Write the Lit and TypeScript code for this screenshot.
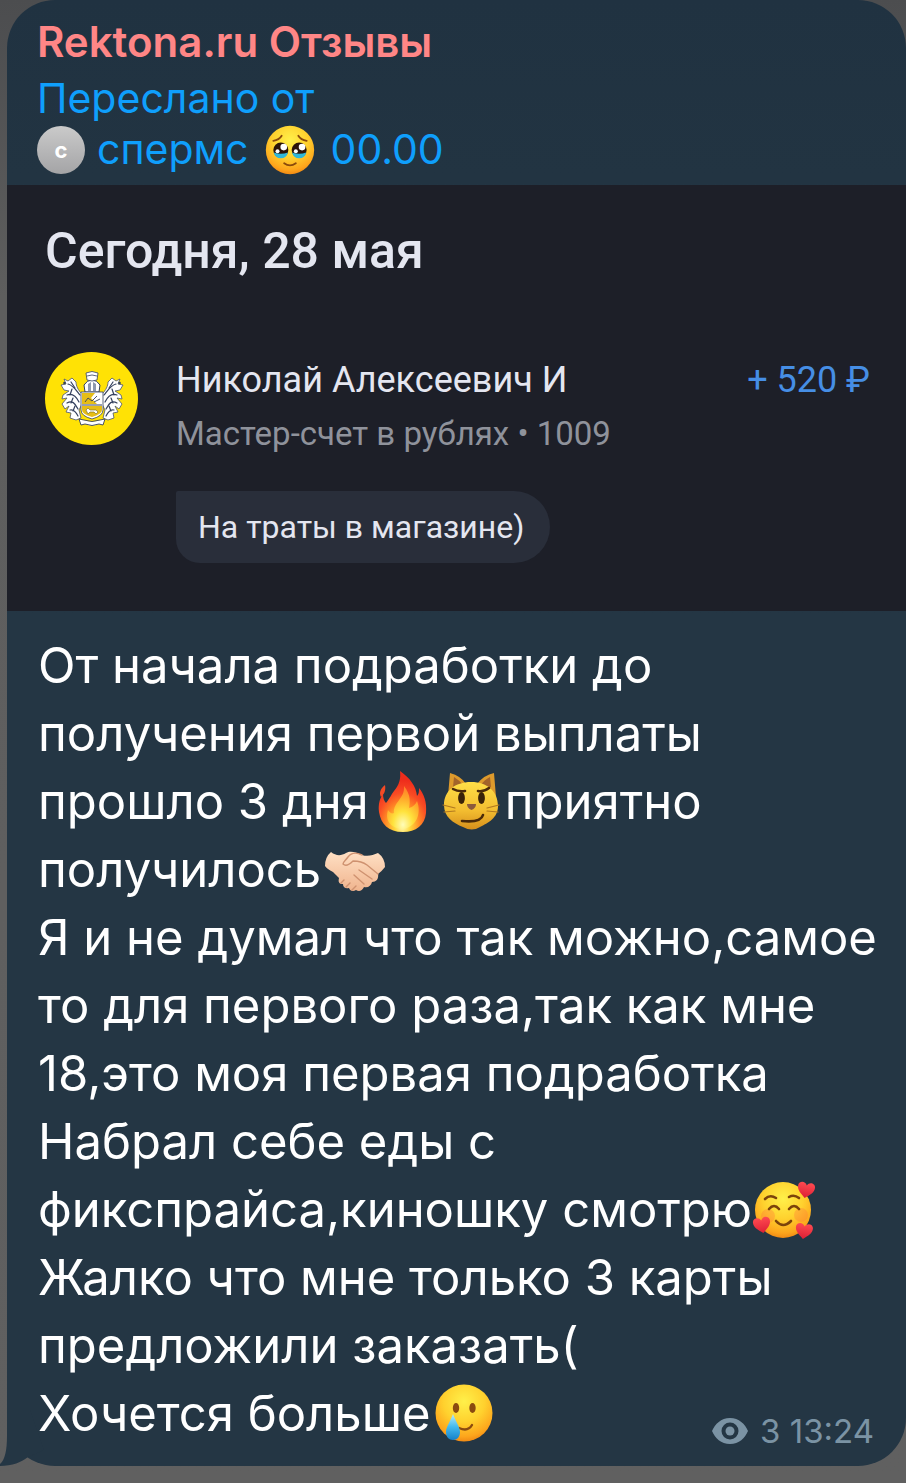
import { LitElement, html, svg, css } from "lit";
import { customElement, property } from "lit/decorators.js";

const defs = svg`
  <defs>
    <radialGradient id="face" cx="0.5" cy="0.3" r="0.72">
      <stop offset="0" stop-color="#fff04a" />
      <stop offset="0.5" stop-color="#ffd12e" />
      <stop offset="0.85" stop-color="#fda51c" />
      <stop offset="1" stop-color="#ee8412" />
    </radialGradient>
    <linearGradient id="cat" x1="0" y1="0" x2="0" y2="1">
      <stop offset="0" stop-color="#ffdf47" />
      <stop offset="0.6" stop-color="#f3bd30" />
      <stop offset="1" stop-color="#d68f1c" />
    </linearGradient>
    <radialGradient id="fire" cx="0.5" cy="0.9" r="0.75">
      <stop offset="0" stop-color="#fffbc0" />
      <stop offset="0.22" stop-color="#ffd93c" />
      <stop offset="0.48" stop-color="#ff8a26" />
      <stop offset="0.72" stop-color="#f94c24" />
      <stop offset="1" stop-color="#ee2d1c" />
    </radialGradient>
    <radialGradient id="flame" cx="0.5" cy="0.9" r="0.9">
      <stop offset="0" stop-color="#fffcb8" />
      <stop offset="0.35" stop-color="#ffe23c" />
      <stop offset="0.7" stop-color="#ffa52a" />
      <stop offset="1" stop-color="#ff7a28" />
    </radialGradient>
    <linearGradient id="skin" x1="0" y1="0" x2="0" y2="1">
      <stop offset="0" stop-color="#ffe0c4" />
      <stop offset="1" stop-color="#f0b48e" />
    </linearGradient>
    <linearGradient id="heart" x1="0" y1="0" x2="0" y2="1">
      <stop offset="0" stop-color="#ff4a50" />
      <stop offset="1" stop-color="#dd1f35" />
    </linearGradient>
    <linearGradient id="tear" x1="0" y1="0" x2="0" y2="1">
      <stop offset="0" stop-color="#b9ecfa" />
      <stop offset="0.5" stop-color="#43b9ee" />
      <stop offset="1" stop-color="#1680c8" />
    </linearGradient>
  </defs>`;

const heart = svg`<path fill="url(#heart)" d="M0 8C-5 4-9 1-8.500-4C-8-8-2-9 0-4.500C2-9 8-8 8.500-4C9 1 5 4 0 8Z" />`;

const drawings = {
  pleading: svg`
    <circle cx="30" cy="30" r="29" fill="url(#face)" />
    <g fill="none" stroke="#8a4a0c" stroke-width="2.200" stroke-linecap="round">
      <path d="M10 19Q17 18 20 13" />
      <path d="M50 19Q43 18 40 13" />
      <path d="M23 46Q30 51 37 46" />
    </g>
    <circle cx="19" cy="30" r="9" fill="#2b1409" />
    <circle cx="41" cy="30" r="9" fill="#2b1409" />
    <path d="M10.500 33Q19 36 27.500 33Q26 40 19 40T10.500 33Z" fill="#2fb7d8" />
    <path d="M32.500 33Q41 36 49.500 33Q48 40 41 40T32.500 33Z" fill="#2fb7d8" />
    <circle cx="22.500" cy="26.500" r="4" fill="#fff" />
    <circle cx="44.500" cy="26.500" r="4" fill="#fff" />
    <circle cx="15" cy="31.500" r="2.400" fill="#fff" />
    <circle cx="37" cy="31.500" r="2.400" fill="#fff" />`,
  fire: svg`
    <path fill="url(#fire)" d="M27 0C37 7 43 15 44 25C46 23 46 20 46 17C51 23 54 31 53 42C52 54 43 61 30 61C15 61 8 53 6 41C5 33 7 27 10 23C10 27 11 30 13 32C17 27 18 24 21 20C26 14 28 8 27 0Z" />
    <path fill="url(#flame)" d="M31 15C38 24 37 31 36 37C40 36 43 33 44 30C49 43 43 56 30 58C16 57 12 48 15 39C17 42 19 43 21 42C20 31 32 28 31 15Z" />
    <path fill="#f44a25" d="M12 14C13 20 11 23 8 26C6 22 7 18 12 14Z" />`,
  cat: svg`
    <path fill="#dd9a2c" d="M7 25L9 2Q20 5 25 13L36 13Q43 4 53 2L55 26Z" />
    <path fill="#a3642a" d="M12 16L13 6Q18 9 22 14ZM50 16L49 6Q43 9 40 14Z" />
    <path fill="url(#cat)" d="M30 11C47 11 57 21 57 35C57 47 47 52 39 56Q31 61 22 56C12 52 3 46 3 34C3 20 14 11 30 11Z" />
    <g fill="#3a2208">
      <ellipse cx="20.500" cy="27" rx="3.400" ry="6" />
      <ellipse cx="40.500" cy="27" rx="3.400" ry="6" />
    </g>
    <g fill="none" stroke="#4a2a0a" stroke-width="2.600" stroke-linecap="round">
      <path d="M12 18Q17 21 24 20" />
      <path d="M37 20Q43 21 48 17" />
      <path d="M21 50Q40 52 42 44" />
    </g>
    <g fill="none" stroke="#b07820" stroke-width="1.200" stroke-linecap="round">
      <path d="M2 34L14 37M3 41L14 40M58 34L46 37M57 41L46 40" />
    </g>
    <path fill="#8c5a3c" d="M26 33H35Q35 37 30.500 39Q26 37 26 33Z" />`,
  handshake: svg`
    <g transform="translate(0 3)">
      <path fill="url(#skin)" d="M6 10C11 14 16 14 21 11C26 8 32 11 37 13C43 15 48 13 53 11Q60 16 60 25Q57 29 53 32C54 37 51 40 47 40C46 44 43 46 39 45C37 49 34 50 31 48C28 50 25 49 24 46C20 47 18 45 18 42C14 42 13 40 14 36L8 30Q2 27 0 24Q0 15 6 10Z" />
      <g fill="none" stroke="#cf9270" stroke-width="1.400" stroke-linecap="round" stroke-linejoin="round">
        <path d="M37 13C31 10 26 11 23 15C20 19 18 20 18 22C21 25 25 22 28 19C34 19 38 20 42 23L53 32" />
        <path d="M34 28L47 37M29 33L39 42M19 38L16 41M25 41L21 45M31 44L27 48" />
      </g>
    </g>`,
  hearts: svg`
    <circle cx="27" cy="31" r="28" fill="url(#face)" />
    <circle cx="12" cy="37" r="7" fill="#ff7a3c" opacity="0.35" />
    <circle cx="45" cy="36" r="7" fill="#ff7a3c" opacity="0.35" />
    <g fill="none" stroke="#7c430b" stroke-width="2.600" stroke-linecap="round">
      <path d="M9 20Q14 15 20 19" />
      <path d="M33 18Q38 15 43 19" />
      <path d="M13 30Q18 24 23 30" />
      <path d="M33 30Q38 24 43 30" />
      <path d="M20 42Q27 50 35 42" />
    </g>
    <g transform="translate(50 11) rotate(10)">${heart}</g>
    <g transform="translate(6 46) rotate(-10)">${heart}</g>
    <g transform="translate(48 52) rotate(8)">${heart}</g>`,
  tear: svg`
    <circle cx="29" cy="30" r="28.500" fill="url(#face)" />
    <ellipse cx="21" cy="25" rx="3.200" ry="5" fill="#8a4a10" />
    <ellipse cx="37.500" cy="25" rx="3.200" ry="5" fill="#8a4a10" />
    <path d="M24 45Q33 49 37 42" fill="none" stroke="#8a4a10" stroke-width="2.400" stroke-linecap="round" />
    <path fill="url(#tear)" d="M18 31C21 39 25 44 25 49C25 54 22 57 18 57C14 57 11 54 11 49C11 44 15 39 18 31Z" />`,
};

type EmojiName = keyof typeof drawings;

@customElement("chat-emoji")
export class ChatEmoji extends LitElement {
  @property() name: EmojiName = "fire";
  @property() label = "";

  static styles = css`
    :host {
      display: inline-block;
      width: 60px;
      height: 60px;
      margin: 0 4px;
      vertical-align: -12px;
      line-height: 0;
    }
    svg {
      display: block;
      width: 100%;
      height: 100%;
      overflow: visible;
    }
  `;

  render() {
    return html`<svg viewBox="0 0 60 60" role="img" aria-label=${this.label}>
      ${defs}${drawings[this.name]}
    </svg>`;
  }
}

const wing = svg`
  <path fill="#fff" stroke="#4a5470" stroke-width="0.800" stroke-linejoin="round"
    d="M37 42C33 38 31 34 31 30L27 26L23 29L19 27L21 32L16 33L19 38L24 39L18 43L17 47L22 46L17 52L20 57L24 54L21 60L26 61L25 66L31 68L36 66L34 58L37 52Z" />
  <g fill="none" stroke="#34405e" stroke-width="1.200" stroke-linecap="round">
    <path d="M23 32C28 33 31 38 35 43M22 43C27 41 31 44 34 50M22 51C27 48 30 51 33 57M25 58C28 57 31 60 33 64" />
    <path d="M26 30L30 36M27 37L25 43M28 46L26 51M30 54L28 59" />
  </g>
  <circle cx="19.500" cy="31" r="1.300" fill="#34405e" />`;

const crest = svg`
  <circle cx="46.500" cy="46.500" r="46.500" fill="#ffe205" />
  ${wing}
  <g transform="matrix(-1 0 0 1 94 0)">${wing}</g>
  <path fill="#fff" stroke="#34405e" d="M40 40L39 33Q42 28 47 28T55 33L54 40Z" />
  <path fill="#8d98ae" d="M43 39V32L46 30V39ZM48 39V30L51 32V39Z" />
  <path fill="#fff" stroke="#34405e" stroke-width="0.800" d="M42 28L41 21Q47 18 53 21L52 28Q47 30 42 28Z" />
  <path fill="none" stroke="#34405e" stroke-width="0.800" d="M42 24Q47 22 52 24" />
  <path fill="#fff" stroke="#34405e" stroke-width="0.800" d="M36 40H58V58Q58 64 47 67Q36 64 36 58Z" />
  <path fill="#e5bd16" d="M37 41H50L46 46L52 52H37ZM37 54H57V58Q57 62 47 65Q37 62 37 58Z" />
  <path stroke="#34405e" stroke-width="1" d="M37 53H57" />
  <path fill="none" stroke="#34405e" stroke-width="0.900" d="M40 50L43 46L47 49L52 44M49 50L55 47" />
  <path fill="#fff" stroke="#6e6420" stroke-width="0.600" d="M41 58L43 56L45 58H51L53 60L51 62L49 60H45L43 62Z" />
  <path fill="#fff" stroke="#34405e" stroke-width="0.900" d="M34 67L39 68Q47 71 55 68L60 67L58 73L54 72Q47 75 40 72L36 73Z" />`;

@customElement("app-root")
export class AppRoot extends LitElement {
  static styles = css`
    :host {
      display: block;
      box-sizing: border-box;
      padding: 0 0 17px 7px;
      background: linear-gradient(#4c4d4f, #5e5e5e 20%, #606060);
      font-family: Inter, "Liberation Sans", sans-serif;
    }
    .bubble {
      position: relative;
      border-radius: 48px;
      background: linear-gradient(#203241, #223442 12%, #243644 42%, #243644);
    }
    .tail {
      position: absolute;
      left: -7px;
      bottom: 0;
      width: 44px;
      height: 56px;
    }
    .head {
      padding: 16px 31px 10px 30px;
      font-size: 41px;
      line-height: 51px;
      color: #0f9ffc;
    }
    .title,
    .line {
      margin: 0;
    }
    .title {
      margin-bottom: 6px;
      font-size: 42px;
      font-weight: 600;
      color: #ff8686;
    }
    .source {
      display: flex;
      align-items: center;
      gap: 12px;
      color: inherit;
      text-decoration: none;
    }
    .source chat-emoji {
      width: 50px;
      height: 50px;
    }
    .avatar {
      display: grid;
      place-items: center;
      width: 48px;
      height: 48px;
      border-radius: 50%;
      background: linear-gradient(#cacaca, #a4a4a6);
      font-size: 22px;
      font-weight: 700;
      line-height: 24px;
      color: #fff;
    }
    .bank {
      padding: 36px 36px 48px 38px;
      background: #1d1f28;
      color: #e4e6f0;
      font-family: Roboto, "Noto Sans", sans-serif;
    }
    .date {
      margin: 0 0 71px;
      font-size: 50px;
      font-weight: 500;
      line-height: 60px;
    }
    .operation {
      display: grid;
      grid-template-columns: 93px 1fr auto;
      column-gap: 38px;
    }
    .logo {
      width: 93px;
      height: 93px;
    }
    .name,
    .amount {
      margin: 0;
      font-size: 36px;
      line-height: 56px;
    }
    .amount {
      color: #468ee5;
    }
    .account {
      margin: 0;
      font-size: 33px;
      line-height: 52px;
      color: #8f929b;
    }
    .note {
      display: inline-block;
      margin: 31px 0 0;
      padding: 10px 26px 10px 22px;
      border-radius: 2px 36px 36px 24px;
      background: #292e3a;
      font-size: 32px;
      line-height: 52px;
    }
    .text {
      padding: 21px 28px 18px 31px;
      font-size: 49px;
      line-height: 68px;
      color: #fff;
    }
    .text p {
      margin: 0;
    }
    .last {
      display: flex;
      justify-content: space-between;
      align-items: flex-end;
    }
    .meta {
      display: flex;
      align-items: center;
      gap: 12px;
      padding-right: 4px;
      font-size: 33px;
      line-height: 34px;
      color: #7b93a4;
    }
    .eye {
      width: 36px;
      height: 26px;
    }
  `;

  render() {
    return html`
      <article class="bubble">
        <svg class="tail" viewBox="0 0 44 56" aria-hidden="true">
          <path fill="#243644" d="M7 0V26C7 40 5 50 0 54V56C12 56 22 52 28 47L44 40L30 0Z" />
        </svg>
        <header class="head">
          <h1 class="title">Rektona.ru Отзывы</h1>
          <p class="line">Переслано от</p>
          <a class="source" href="#source">
            <span class="avatar">с</span>
            <span>спермс</span>
            <chat-emoji name="pleading" label="Умоляющее лицо"></chat-emoji>
            <span>00.00</span>
          </a>
        </header>
        <section class="bank">
          <h2 class="date">Сегодня, 28 мая</h2>
          <div class="operation">
            <svg class="logo" viewBox="0 0 93 93" role="img" aria-label="Герб банка">${crest}</svg>
            <div>
              <p class="name">Николай Алексеевич И</p>
              <p class="account">Мастер-счет в рублях • 1009</p>
              <p class="note">На траты в магазине)</p>
            </div>
            <p class="amount">+ 520 ₽</p>
          </div>
        </section>
        <div class="text">
          <p>
            От начала подработки до получения первой выплаты
            <span>прошло 3 дня</span><chat-emoji name="fire" label="Огонь"></chat-emoji><chat-emoji name="cat" label="Кот с ухмылкой"></chat-emoji><span>приятно</span>
            <span>получилось</span><chat-emoji name="handshake" label="Рукопожатие"></chat-emoji>
          </p>
          <p>Я и не думал что так можно,самое то для первого раза,так как мне 18,это моя первая подработка</p>
          <p>
            Набрал себе еды с фикспрайса,киношку
            смотрю<chat-emoji name="hearts" label="Лицо с сердечками"></chat-emoji>
          </p>
          <p>Жалко что мне только 3 карты предложили заказать(</p>
          <div class="last">
            <p>Хочется больше<chat-emoji name="tear" label="Улыбка со слезой"></chat-emoji></p>
            <div class="meta">
              <svg class="eye" viewBox="0 0 36 26" role="img" aria-label="Просмотры">
                <path fill="currentColor" fill-rule="evenodd" d="M18 0C27 0 33 6 36 13C33 20 27 26 18 26S3 20 0 13C3 6 9 0 18 0ZM18 4.500A8.500 8.500 0 1 0 18 21.500A8.500 8.500 0 1 0 18 4.500Z" />
                <circle cx="18" cy="13" r="4.500" fill="currentColor" />
              </svg>
              <span>3 <time datetime="13:24">13:24</time></span>
            </div>
          </div>
        </div>
      </article>
    `;
  }
}
